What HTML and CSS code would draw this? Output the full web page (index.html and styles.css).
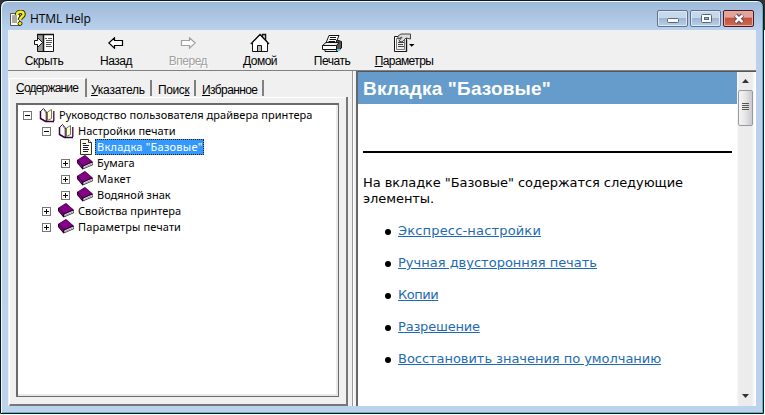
FILE: index.html
```html
<!DOCTYPE html>
<html lang="ru">
<head>
<meta charset="utf-8">
<title>HTML Help</title>
<link rel="stylesheet" href="styles.css">
</head>
<body>
<svg class="defs" width="0" height="0">
  <symbol id="open" viewBox="0 0 16 16">
    <path d="M1.500 4.500L4.500 1.500L7.500 5V14.500L1.500 11.500Z" fill="#fff" stroke="#402040"/>
    <path d="M1.500 4V11.500L6.500 14.500H15" fill="none" stroke="#400040" stroke-width="1.500"/>
    <path d="M8.500 13.500V5L12.500 2.500V11.500Z" fill="#ffffcf" stroke="#77735a"/>
    <path d="M5 3L7 6V13" fill="none" stroke="#807d68"/>
    <path d="M14.800 4V14" stroke="#400040" stroke-width="1.300"/>
  </symbol>
  <symbol id="book" viewBox="0 0 16 16">
    <path d="M0 5L0 8L5.500 14.500L16 10V7L8 0Z" fill="#1b001c"/>
    <path d="M.8 4.800L8 .8L15 6.300L6 10.800Z" fill="#860087"/>
    <path d="M6.500 11.500L15.500 7.500V9.500L6.300 13.500Z" fill="#fff"/>
    <path d="M1 6.500L5.200 12" stroke="#860087" stroke-width="1.300"/>
    <path d="M7 12.500L15 8.700" stroke="#777" stroke-width=".7"/>
  </symbol>
  <symbol id="page" viewBox="0 0 16 16">
    <path d="M3.500 .500H11.500L14.500 3.500V15.500H3.500Z" fill="#ffffdc" stroke="#333"/>
    <path d="M11.500 .500V3.500H14.500" fill="#fff" stroke="#333"/>
    <path d="M5.500 4.500H9M6 6.500H12M6 8.500H11M6 10.500H12M6 12.500H11" stroke="#111766"/>
  </symbol>
  <symbol id="arrow" viewBox="0 0 16 12">
    <path d="M.8 6L6.500 .8V3.500H14.500V8.500H6.500V11.200Z" fill="#fff" stroke="currentColor" stroke-width="1.200"/>
  </symbol>
</svg>
<div class="window">
  <header class="titlebar">
    <svg class="appicon" width="16" height="17" viewBox="0 0 16 17">
      <path d="M.500 3.500H9.500V15.500H.500Z" fill="#fffff0" stroke="#555"/>
      <path d="M2 6H7M2 8H7M2 10H7M2 12H7" stroke="#555"/>
      <path d="M7 5C7 1 14 .500 13.500 4.500C13 7 10 7 10 10" fill="none" stroke="#333300" stroke-width="4.500"/>
      <path d="M7 5C7 1 14 .500 13.500 4.500C13 7 10 7 10 10" fill="none" stroke="#f7ee24" stroke-width="2.500"/>
      <circle cx="10" cy="13.500" r="2" fill="#f7ee24" stroke="#333300"/>
    </svg>
    <h1 class="title">HTML Help</h1>
    <div class="controls">
      <span class="ctl"><svg width="28" height="15"><rect x="8.500" y="6.500" width="11" height="4" rx="1" fill="#fff" stroke="#56657e"/></svg></span>
      <span class="ctl"><svg width="28" height="15"><rect x="9.500" y="2.500" width="10" height="8" rx="1" fill="#fff" stroke="#56657e"/><rect x="12.500" y="5.500" width="4" height="2" fill="#9db5d3" stroke="#56657e"/></svg></span>
      <span class="ctl close"><svg width="28" height="15"><path d="M10.500 3L17.500 10.500M17.500 3L10.500 10.500" stroke="#5d4a59" stroke-width="4.500"/><path d="M10.500 3.300L17.500 10.200M17.500 3.300L10.500 10.200" stroke="#fff" stroke-width="2.500"/></svg></span>
    </div>
  </header>
  <div class="client">
    <nav class="toolbar">
      <div class="tool t1">
        <svg width="20" height="20" viewBox="0 0 20 20"><path d="M3.500 1.500H19.500V18.500H3.500Z" fill="#fff" stroke="#111"/><path d="M4 2H9V18H4Z" fill="#999"/><path d="M3 1.500H20M9.500 2V18" stroke="#111" stroke-width="1.500"/><path d="M11 5.500H13M14 5.500H18M12 7.500H18M12 9.500H18M12 11.500H17M12 13.500H18" stroke="#555"/><path d="M.500 7.500H3.500V4.500L8.500 9.500L3.500 14.500V11.500H.500Z" fill="#fff" stroke="#111"/></svg>
        <span>Скрыть</span>
      </div>
      <div class="tool t2"><svg width="16" height="20"><use href="#arrow" y="4" width="16" height="12"/></svg><span>Назад</span></div>
      <div class="tool t3 disabled"><svg width="16" height="20"><g transform="translate(16 0) scale(-1 1)"><use href="#arrow" y="4" width="16" height="12"/></g></svg><span>Вперед</span></div>
      <div class="tool t4">
        <svg width="20" height="20" viewBox="0 0 20 20"><path d="M12.500 6V1.500H15.500V8" fill="#fff" stroke="#111" stroke-width="1.500"/><path d="M2.500 9L10 2L17.500 9V18.500H2.500Z" fill="#fff" stroke="#111"/><path d="M.800 11L10 1.500L19 11" fill="none" stroke="#111" stroke-width="1.300"/><path d="M7.500 18V12.500H11.500V18" fill="#bbb" stroke="#111"/></svg>
        <span>Домой</span>
      </div>
      <div class="tool t5">
        <svg width="20" height="20" viewBox="0 0 20 20"><path d="M4 10L7 2.500H17L14 10Z" fill="#fff" stroke="#111"/><path d="M8 4.500H14M7.500 6.500H14M6.500 8.500H13" stroke="#111"/><path d="M15 7L19.500 8.500V15L15.500 18.500L12 14Z" fill="#555" stroke="#111"/><path d="M.500 12.500L4 9.500H17L14.500 12.500Z" fill="#eee" stroke="#111"/><path d="M.500 12.500H14.500V16.500H.500Z" fill="#fff" stroke="#111"/><path d="M3 16.500V18.500H15.500L19 15" fill="none" stroke="#111"/><path d="M15 17H18" stroke="#49d6dc" stroke-width="2"/></svg>
        <span>Печать</span>
      </div>
      <div class="tool t6">
        <svg width="22" height="20" viewBox="0 0 22 20"><path d="M1.500 3.500H13.500V18.500H1.500Z" fill="#fff" stroke="#111"/><path d="M3.500 5.500H11.500V16.500H3.500Z" fill="#eee" stroke="#777"/><path d="M5 9.500H11M5 11.500H10M5 13.500H11" stroke="#444"/><path d="M5 6V3L8 1H17.500V6L13 5L9 9L6 8L9 4Z" fill="#ddd" stroke="#444"/><path d="M13.500 7V18.500" stroke="#111" stroke-width="1.400"/><path d="M16 11H21.500L18.700 13.800Z" fill="#000"/></svg>
        <span><u>П</u>араметры</span>
      </div>
    </nav>
    <div class="main">
      <aside class="side">
        <div class="tabs">
          <span class="tab on"><b class="a1"><u>С</u>одержание</b></span>
          <span class="tab w2"><b class="a2"><u>У</u>казатель</b></span>
          <span class="tab w3"><b class="a3">Поис<u>к</u></b></span>
          <span class="tab w4"><b class="a4"><u>И</u>збранное</b></span>
        </div>
        <div class="panel">
          <ul class="tree">
            <li><i class="box"></i><svg><use href="#open"/></svg><span class="r1">Руководство пользователя драйвера принтера</span></li>
            <li class="l1"><i class="box"></i><svg><use href="#open"/></svg><span class="r2">Настройки печати</span></li>
            <li class="l2"><i class="box none"></i><svg><use href="#page"/></svg><span class="sel"><span class="r3">Вкладка "Базовые"</span></span></li>
            <li class="l2"><i class="box plus"></i><svg><use href="#book"/></svg><span class="r4">Бумага</span></li>
            <li class="l2"><i class="box plus"></i><svg><use href="#book"/></svg><span class="r5">Макет</span></li>
            <li class="l2"><i class="box plus"></i><svg><use href="#book"/></svg><span class="r6">Водяной знак</span></li>
            <li class="l1"><i class="box plus"></i><svg><use href="#book"/></svg><span class="r7">Свойства принтера</span></li>
            <li class="l1"><i class="box plus"></i><svg><use href="#book"/></svg><span class="r8">Параметры печати</span></li>
          </ul>
        </div>
      </aside>
      <div class="splitter"></div>
      <article class="doc">
        <h2>Вкладка "Базовые"</h2>
        <hr>
        <p>На вкладке "Базовые" содержатся следующие элементы.</p>
        <ul class="links">
          <li><a class="k1">Экспресс-настройки</a></li>
          <li><a>Ручная двусторонняя печать</a></li>
          <li><a class="k3">Копии</a></li>
          <li><a class="k4">Разрешение</a></li>
          <li><a class="k5">Восстановить значения по умолчанию</a></li>
        </ul>
      </article>
      <div class="scroll">
        <svg class="btn" width="7" height="4"><path d="M0 4L3.500 0L7 4Z" fill="#333"/></svg>
        <div class="thumb"><i></i><i></i><i></i><i></i></div>
        <svg class="btn down" width="7" height="4"><path d="M0 0H7L3.500 4Z" fill="#333"/></svg>
      </div>
    </div>
  </div>
</div>
</body>
</html>
```
FILE: styles.css
```css
* { box-sizing: border-box; }
body { margin: 0; height: 415px; overflow: hidden; background: linear-gradient(#333 0 30px, #fff 30px); font: 12px "Liberation Sans", Arial, sans-serif; color: #000; }
.defs { display: block; height: 0; }
.window { width: 764px; height: 414px; border: 1px solid #0a1a22; border-radius: 7px 7px 0 0; padding: 0 7px 7px; background: linear-gradient(#9db8d8, #b9d1ec 29px, #bdd3ec); box-shadow: inset 1px 1px #f0f7fd, inset -1px -1px #62b4c6; }
.titlebar { height: 29px; display: flex; align-items: flex-start; }
.appicon { margin: 9px 0 0 2px; }
.title { margin: 9px 0 0 4px; font: 12px/18px "Open Sans", sans-serif; letter-spacing: -.1px; white-space: nowrap; }
.controls { margin: 9px 2px 0 auto; display: flex; gap: 2px; }
.ctl { width: 31px; height: 17px; border: 1px solid #5d7190; border-radius: 2px; background: linear-gradient(#c7d8ea 0 45%, #9db6d1 50%, #b9d2ec); box-shadow: inset 0 0 0 1px #dce9f6; }
.ctl svg { display: block; margin: 1px auto 0; }
.close { border-color: #4c1720; background: linear-gradient(#e2a398 0 40%, #c3523b 50%, #cf6a52); box-shadow: inset 0 0 0 1px #e7aca1; }
.client { width: 748px; height: 376px; background: #f0f0f0; display: flex; flex-direction: column; }
.toolbar { height: 41px; flex: none; display: flex; border-bottom: 1px solid #808080; }
.tool { width: 72px; display: flex; flex-direction: column; align-items: center; padding-top: 3px; line-height: 14px; white-space: nowrap; letter-spacing: -.5px; }
.tool span { margin-top: 1px; }
.tool.t1 { letter-spacing: -.4px; }
.tool.t6 { letter-spacing: -.6px; }
.tool u, .tab u { text-underline-offset: 1px; }
.disabled { color: #a0a0a0; text-shadow: 1px 1px #fff; }
.main { flex: 1; display: flex; min-height: 0; }
.side { width: 340px; display: flex; flex-direction: column; padding-left: 1px; }
.tabs { height: 27px; display: flex; align-items: flex-end; }
.tab { height: 16px; margin-bottom: 1px; padding: 0 0 0 5px; line-height: 20px; border-right: 2px solid #808080; white-space: nowrap; }
.tab b { font-weight: 400; }
.on { width: 78px; height: 19px; margin: 0; padding-left: 6px; line-height: 18px; border-left: 1px solid #fff; border-top: 1px solid #fff; }
.a1 { letter-spacing: -.8px; } .a2 { letter-spacing: -.25px; } .a3 { letter-spacing: -.4px; } .a4 { letter-spacing: -.6px; }
.w2 { width: 65px; padding-left: 4px; } .w3 { width: 44px; padding-left: 6px; } .w4 { width: 68px; padding-left: 6px; }
.panel { flex: 1; padding: 6px 7px 7px 6px; border-right: 2px solid #777; border-bottom: 2px solid #777; border-left: 1px solid #fff; background: linear-gradient(#fff, #fff) 78px 0 / 262px 1px no-repeat; }
.tree { margin: 0; list-style: none; height: 294px; padding: 1px 0 0 5px; background: #fff; border: 2px solid #6a6a6a; border-right-width: 1px; border-bottom-width: 1px; box-shadow: inset -2px -2px #e9e9e9; font: 11px/16px "Noto Sans", sans-serif; }
.tree li { height: 16px; display: flex; align-items: center; white-space: nowrap; }
.tree li:first-child { margin-top: 1px; }
.tree svg { width: 16px; height: 16px; margin: 0 4px 0 7px; flex: none; }
.l1 { padding-left: 19px; } .l2 { padding-left: 38px; }
.r1 { letter-spacing: .05px; } .r3 { letter-spacing: .25px; } .r5 { letter-spacing: .3px; } .r8 { letter-spacing: .1px; }
.box { width: 9px; height: 9px; flex: none; border: 1px solid #777; background: linear-gradient(#000, #000) center / 5px 1px no-repeat; }
.plus { background: linear-gradient(#000, #000) center / 5px 1px no-repeat, linear-gradient(#000, #000) center / 1px 5px no-repeat; }
.none { visibility: hidden; }
.sel { width: 109px; height: 16px; margin-left: -2px; padding-left: 1px; line-height: 14px; background: #3399ff; color: #fff; border: 1px dotted #222; }
.splitter { width: 10px; border-right: 2px solid #666; background: linear-gradient(#999, #999) 4px 0 / 1px 100% no-repeat, linear-gradient(#fff, #fff) 5px 0 / 1px 100% no-repeat; }
.doc { width: 379px; background: #fff; border-top: 1px solid #555; font: 13px/16px "DejaVu Sans", Verdana, sans-serif; }
.doc h2 { margin: 0; height: 32px; padding-left: 5px; background: #659ccb; color: #fff; font: bold 19px/34px "Liberation Sans", Arial, sans-serif; letter-spacing: .17px; white-space: nowrap; }
.doc hr { height: 2px; margin: 47px 5px 0; border: 0; background: #000; }
.doc p { margin: 22px 5px 0; width: 350px; letter-spacing: -.07px; }
.links { margin: 16px 0 0; padding-left: 27px; list-style: none; }
.links li { height: 16px; margin-bottom: 16px; display: flex; align-items: center; white-space: nowrap; }
.links li::before { content: ""; width: 6px; height: 6px; margin: 1px 7px 0 0; border-radius: 50%; background: #000; }
.links a { color: #1d6bb0; text-decoration: underline; }
.k1 { letter-spacing: .17px; } .k3 { letter-spacing: -.5px; } .k4 { letter-spacing: -.2px; } .k5 { letter-spacing: -.04px; }
.scroll { width: 19px; display: flex; flex-direction: column; align-items: center; padding-right: 2px; background: linear-gradient(90deg, #fafafa, #ececec 2px 15px, #fff 18px); border-top: 1px solid #555; }
.btn { margin-top: 7px; }
.thumb { width: 15px; height: 36px; margin-top: 7px; padding-top: 12px; display: flex; flex-direction: column; gap: 1px; align-items: center; border: 1px solid #999; border-radius: 2px; background: linear-gradient(90deg, #f5f5f5, #e5e5e5 50%, #c9c9cf); }
.thumb i { width: 7px; height: 1px; background: #555; }
.down { margin: auto 0 8px; }
```
